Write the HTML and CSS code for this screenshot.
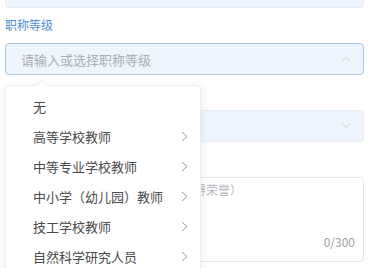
FILE: index.html
```html
<!DOCTYPE html>
<html>
<head>
<meta charset="utf-8">
<link rel="stylesheet" href="styles.css">
</head>
<body>
<div class="form">
    <div class="input first"></div>

    <div class="label">职称等级</div>
    <div class="input active">
        <span class="placeholder">请输入或选择职称等级</span>
        <svg class="arrow" width="10" height="6" viewBox="0 0 10 6"><path d="M1 5.5L5 1.5L9 5.5" fill="none" stroke="#c4ccd4" stroke-width="1"/></svg>
    </div>

    <div class="label"></div>
    <div class="input select">
        <span class="placeholder"></span>
        <svg class="arrow" width="10" height="6" viewBox="0 0 10 6"><path d="M1 0.5L5 4.5L9 0.5" fill="none" stroke="#c4ccd4" stroke-width="1"/></svg>
    </div>

    <div class="label"></div>
    <div class="textarea">
        <div class="placeholder">请输入工作经历及业绩成果（获得荣誉）</div>
        <div class="count">0/300</div>
    </div>
</div>

<div class="dropdown">
    <div class="dropdown-arrow"></div>
    <div class="option">无</div>
    <div class="option">高等学校教师<svg width="7" height="11" viewBox="0 0 7 11"><path d="M1 1L6 5.5L1 10" fill="none" stroke="#999" stroke-width="1"/></svg></div>
    <div class="option">中等专业学校教师<svg width="7" height="11" viewBox="0 0 7 11"><path d="M1 1L6 5.5L1 10" fill="none" stroke="#999" stroke-width="1"/></svg></div>
    <div class="option">中小学（幼儿园）教师<svg width="7" height="11" viewBox="0 0 7 11"><path d="M1 1L6 5.5L1 10" fill="none" stroke="#999" stroke-width="1"/></svg></div>
    <div class="option">技工学校教师<svg width="7" height="11" viewBox="0 0 7 11"><path d="M1 1L6 5.5L1 10" fill="none" stroke="#999" stroke-width="1"/></svg></div>
    <div class="option">自然科学研究人员<svg width="7" height="11" viewBox="0 0 7 11"><path d="M1 1L6 5.5L1 10" fill="none" stroke="#999" stroke-width="1"/></svg></div>
</div>
</body>
</html>
```

FILE: styles.css
```css
body {
    margin: 0;
    background-color: #fff;
    font-family: "Noto Sans CJK SC", "Noto Sans", sans-serif;
    overflow: hidden;
    height: 268px;
    position: relative;
}

.form {
    padding: 0 5px;
}

.input {
    box-sizing: border-box;
    height: 32px;
    border: 1px solid #e6edf5;
    border-radius: 4px;
    background-color: #eef5fc;
    display: flex;
    align-items: center;
    justify-content: space-between;
    padding: 0 10px 0 15px;
}

.first {
    margin-top: -24px;
}

.active {
    border-color: #a8c5dd;
}

.label {
    height: 17px;
    font-size: 12px;
    line-height: 17px;
    color: #4d8fd1;
    margin: 8px 0 10px;
}

.placeholder {
    font-size: 13px;
    color: #a9afb6;
}

.arrow {
    margin-right: 2px;
}

.textarea {
    box-sizing: border-box;
    height: 85px;
    border: 1px solid #e5e5e5;
    border-radius: 4px;
    padding: 3px 10px 0 20px;
    position: relative;
}

.textarea .placeholder {
    font-size: 12px;
    color: #b5b9be;
}

.count {
    position: absolute;
    right: 8px;
    bottom: 11px;
    font-size: 12px;
    color: #a0a0a0;
}

.dropdown {
    position: absolute;
    left: 5px;
    top: 85px;
    width: 194px;
    height: 200px;
    background-color: #fff;
    border: 1px solid #eceef1;
    border-radius: 4px;
    box-shadow: 0 2px 10px rgba(0, 0, 0, 0.08);
    padding-top: 5px;
}

.dropdown-arrow {
    position: absolute;
    top: -5px;
    left: 32px;
    width: 8px;
    height: 8px;
    background-color: #fff;
    border-left: 1px solid #eceef1;
    border-top: 1px solid #eceef1;
    transform: rotate(45deg);
}

.option {
    height: 30px;
    display: flex;
    align-items: center;
    justify-content: space-between;
    padding: 0 12px 0 27px;
    font-size: 13px;
    color: #4a4a4a;
}
```
